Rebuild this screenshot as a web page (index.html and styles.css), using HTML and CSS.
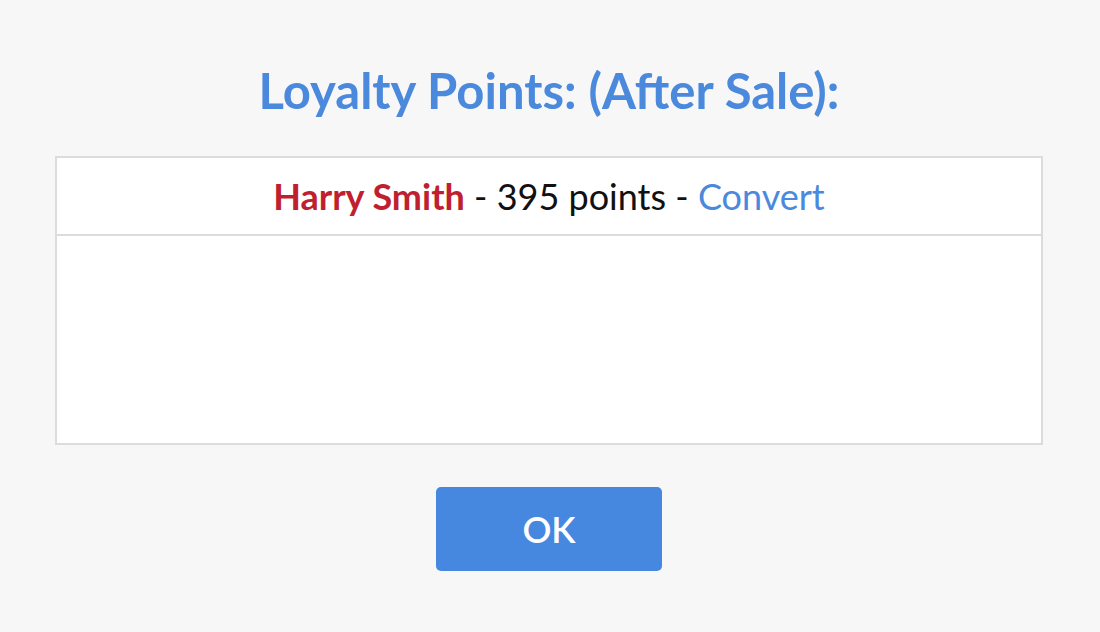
FILE: index.html
```html
<!DOCTYPE html>
<html>
<head>
<meta charset="utf-8">
<link rel="stylesheet" href="styles.css">
</head>
<body>
<div class="dialog">
  <h1 class="title">Loyalty Points: (After Sale):</h1>
  <div class="panel">
    <div class="panel-row">
      <span class="name">Harry Smith</span> - 395 points - <a class="convert" href="#">Convert</a>
    </div>
    <div class="panel-body"></div>
  </div>
  <div class="actions">
    <button class="ok">OK</button>
  </div>
</div>
</body>
</html>
```
FILE: styles.css
```css
html, body {
  margin: 0;
  padding: 0;
  background: #f7f7f7;
  font-family: Lato, "Open Sans", sans-serif;
}
.dialog {
  width: 1100px;
  height: 632px;
  box-sizing: border-box;
  padding: 62px 57px 0 55px;
}
.title {
  margin: 0;
  text-align: center;
  color: #4a89dc;
  font-size: 49px;
  font-weight: 700;
  line-height: 56px;
}
.panel {
  margin-top: 38px;
  background: #fff;
  border: 2px solid #dcdcdc;
}
.panel-row {
  height: 76px;
  border-bottom: 2px solid #dcdcdc;
  display: flex;
  align-items: center;
  justify-content: center;
  font-size: 36px;
  color: #111;
  white-space: pre;
}
.name {
  color: #c01f2f;
  font-weight: 700;
}
.convert {
  color: #4a89dc;
  text-decoration: none;
}
.panel-body {
  height: 207px;
}
.actions {
  display: flex;
  justify-content: center;
  margin-top: 42px;
}
.ok {
  width: 226px;
  height: 84px;
  border: none;
  border-radius: 5px;
  background: #4687df;
  color: #fff;
  font-family: Lato, sans-serif;
  font-size: 36px;
  font-weight: 600;
  cursor: pointer;
}
```
